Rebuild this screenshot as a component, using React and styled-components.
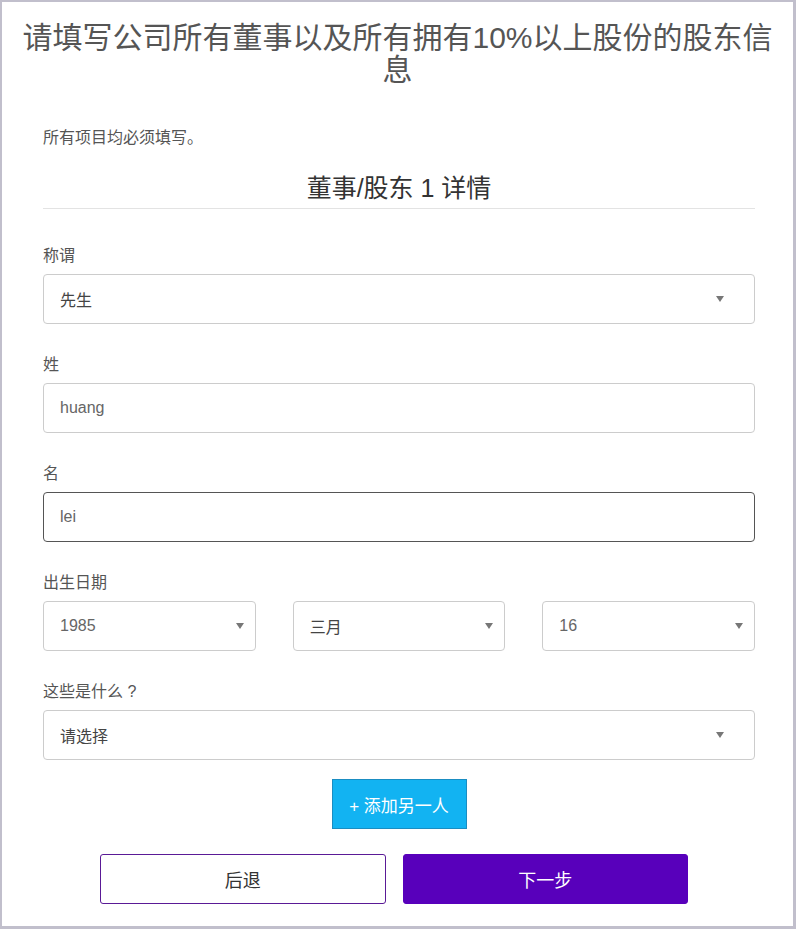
import React from 'react';
import styled, { createGlobalStyle } from 'styled-components';

const GlobalStyle = createGlobalStyle`
  html, body {
    margin: 0;
    padding: 0;
    background: #fff;
  }
  body {
    font-family: "Liberation Sans", "Noto Sans CJK SC", sans-serif;
  }
  * {
    box-sizing: border-box;
  }
`;

const Frame = styled.div`
  width: 796px;
  height: 929px;
  border-style: solid;
  border-color: #c1bfcc;
  border-width: 2px 3px 3px 2px;
  background: #fff;
  display: flex;
  flex-direction: column;
`;

const Title = styled.h1`
  margin: 20px 0 0 0;
  padding: 0 20px;
  font-family: "Liberation Sans", "Noto Sans CJK SC", sans-serif;
  font-size: 30px;
  line-height: 32px;
  font-weight: 400;
  color: #555;
  text-align: center;
`;

const Body = styled.div`
  padding: 0 38px 0 41px;
  display: flex;
  flex-direction: column;
`;

const Note = styled.p`
  margin: 40px 0 0 0;
  font-size: 16px;
  line-height: 24px;
  color: #555;
`;

const SectionHeading = styled.h2`
  margin: 22px 0 35px 0;
  padding-bottom: 3px;
  border-bottom: 1px solid #e3e3e3;
  font-size: 25px;
  line-height: 33px;
  font-weight: 400;
  color: #333;
  text-align: center;
`;

const Group = styled.div`
  margin-bottom: ${props => props.$last ? '19px' : '29px'};
`;

const Label = styled.label`
  display: block;
  margin-bottom: 6px;
  font-size: 16px;
  line-height: 24px;
  color: #555;
`;

const TextInput = styled.input`
  display: block;
  width: 100%;
  height: 50px;
  padding: 0 16px;
  border: 1px solid ${props => props.$focused ? '#555' : '#ccc'};
  border-radius: 4px;
  font-family: inherit;
  font-size: 16px;
  color: #666;
  background: #fff;
  outline: none;
`;

const SelectBox = styled.div`
  height: 50px;
  display: flex;
  align-items: center;
  justify-content: space-between;
  padding: 0 ${props => props.$compact ? '11px' : '30px'} 0 16px;
  border: 1px solid #ccc;
  border-radius: 4px;
  font-size: 16px;
  color: ${props => props.$muted ? '#666' : '#444'};
  background: #fff;
`;

const Arrow = styled.span`
  width: 0;
  height: 0;
  border-left: 4px solid transparent;
  border-right: 4px solid transparent;
  border-top: 6px solid #777;
`;

const DateRow = styled.div`
  display: grid;
  grid-template-columns: repeat(3, 1fr);
  column-gap: 37px;
`;

const AddRow = styled.div`
  display: flex;
  justify-content: center;
`;

const AddButton = styled.button`
  width: 135px;
  height: 50px;
  border: 1px solid #1a8dc2;
  background: #12b3f2;
  color: #fff;
  font-family: inherit;
  font-size: 17px;
  cursor: pointer;
`;

const NavRow = styled.div`
  display: flex;
  gap: 17px;
  margin-top: 25px;
  padding: 0 67px 0 57px;
`;

const NavButton = styled.button`
  flex: 1;
  height: 50px;
  border-radius: 3px;
  border: 1px solid ${props => props.$primary ? '#5800bb' : '#5a1a96'};
  background: ${props => props.$primary ? '#5800bb' : '#fff'};
  color: ${props => props.$primary ? '#fff' : '#333'};
  font-family: inherit;
  font-size: 18px;
  cursor: pointer;
`;

const Select = ({ value, compact, muted }) => (
  <SelectBox $compact={compact} $muted={muted}>
    <span>{value}</span>
    <Arrow />
  </SelectBox>
);

const App = () => (
  <>
    <GlobalStyle />
    <Frame>
      <Title>请填写公司所有董事以及所有拥有10%以上股份的股东信息</Title>
      <Body>
        <Note>所有项目均必须填写。</Note>
        <SectionHeading>董事/股东 1 详情</SectionHeading>

        <Group>
          <Label>称谓</Label>
          <Select value="先生" />
        </Group>

        <Group>
          <Label>姓</Label>
          <TextInput defaultValue="huang" />
        </Group>

        <Group>
          <Label>名</Label>
          <TextInput defaultValue="lei" $focused />
        </Group>

        <Group>
          <Label>出生日期</Label>
          <DateRow>
            <Select value="1985" compact muted />
            <Select value="三月" compact />
            <Select value="16" compact muted />
          </DateRow>
        </Group>

        <Group $last>
          <Label>这些是什么 ?</Label>
          <Select value="请选择" />
        </Group>

        <AddRow>
          <AddButton>+ 添加另一人</AddButton>
        </AddRow>

        <NavRow>
          <NavButton>后退</NavButton>
          <NavButton $primary>下一步</NavButton>
        </NavRow>
      </Body>
    </Frame>
  </>
);

export default App;
